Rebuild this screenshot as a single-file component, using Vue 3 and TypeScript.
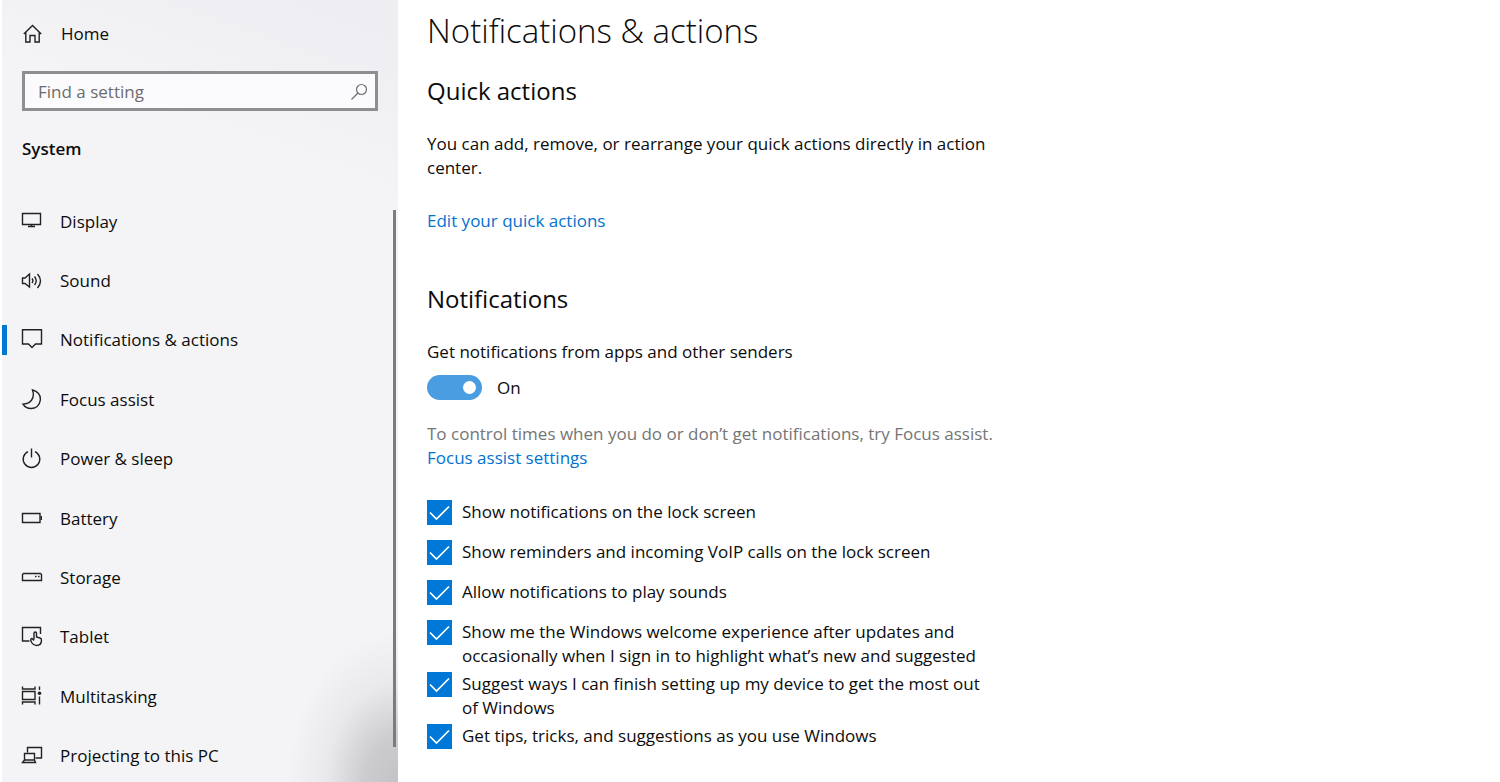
<script setup lang="ts">
import { ref } from 'vue'

interface NavItem {
  id: string
  label: string
}

interface Option {
  id: string
  label: string
  checked: boolean
}

const navItems: NavItem[] = [
  { id: 'display', label: 'Display' },
  { id: 'sound', label: 'Sound' },
  { id: 'notifications', label: 'Notifications & actions' },
  { id: 'focus', label: 'Focus assist' },
  { id: 'power', label: 'Power & sleep' },
  { id: 'battery', label: 'Battery' },
  { id: 'storage', label: 'Storage' },
  { id: 'tablet', label: 'Tablet' },
  { id: 'multitasking', label: 'Multitasking' },
  { id: 'projecting', label: 'Projecting to this PC' },
]

const current = ref('notifications')
const query = ref('')
const notificationsOn = ref(true)

const options = ref<Option[]>([
  { id: 'lock', label: 'Show notifications on the lock screen', checked: true },
  { id: 'voip', label: 'Show reminders and incoming VoIP calls on the lock screen', checked: true },
  { id: 'sounds', label: 'Allow notifications to play sounds', checked: true },
  {
    id: 'welcome',
    label: 'Show me the Windows welcome experience after updates and occasionally when I sign in to highlight what’s new and suggested',
    checked: true,
  },
  {
    id: 'setup',
    label: 'Suggest ways I can finish setting up my device to get the most out of Windows',
    checked: true,
  },
  { id: 'tips', label: 'Get tips, tricks, and suggestions as you use Windows', checked: true },
])
</script>

<template>
  <div class="settings">
    <aside class="sidebar">
      <a class="home" href="#home">
        <svg class="icon" viewBox="0 0 22 22" aria-hidden="true">
          <path d="M1.8 11 L10.5 2.5 L19.2 11 M3.8 9.5 V19 H8 V12.5 H13 V19 H17.2 V9.5" />
        </svg>
        <span>Home</span>
      </a>

      <div class="search">
        <input v-model="query" type="text" placeholder="Find a setting" aria-label="Find a setting" />
        <svg class="search-icon" viewBox="0 0 18 18" aria-hidden="true">
          <circle cx="11.5" cy="6.5" r="5" />
          <path d="M8 10 L1.5 16.5" />
        </svg>
      </div>

      <h2 class="category">System</h2>

      <nav class="nav" aria-label="System">
        <ul class="nav-list">
          <li v-for="item in navItems" :key="item.id">
            <a
              class="nav-link"
              :class="{ active: current === item.id }"
              :href="'#' + item.id"
              @click="current = item.id"
            >
              <svg class="icon" viewBox="0 0 22 22" aria-hidden="true">
                <g v-if="item.id === 'display'">
                  <path d="M1.5 2.5 H19.5 V13.5 H1.5 Z M10.5 13.5 V16 M7 15.5 H14" />
                </g>
                <g v-else-if="item.id === 'sound'">
                  <path d="M1.5 8 H4 L8.5 4 V17 L4 13.5 H1.5 Z" />
                  <path d="M11 8.5 Q12.8 10.8 11 13 M13.5 6.5 Q17 10.8 13.5 15 M16.5 4 Q22.5 10.8 16.5 18" />
                </g>
                <g v-else-if="item.id === 'notifications'">
                  <path d="M1.5 0.8 H20.5 V15 H14.5 L11 18.5 L7.5 15 H1.5 Z" />
                </g>
                <g v-else-if="item.id === 'focus'">
                  <path d="M11.5 0.9 C17 2.6 19.8 6.1 19.3 11.1 C18.6 16.6 14.5 19.5 10 19.5 C6.5 19.5 3.5 17.6 2 15.1 C9 15.1 14.5 9.6 11.5 0.9 Z" />
                </g>
                <g v-else-if="item.id === 'power'">
                  <path d="M10.5 0.5 V9.5 M7 3.6 A8.3 8.3 0 1 0 14 3.6" />
                </g>
                <g v-else-if="item.id === 'battery'">
                  <path d="M1.5 5.5 H19 V14.5 H1.5 Z" />
                  <path d="M20.3 8 V12" />
                </g>
                <g v-else-if="item.id === 'storage'">
                  <path d="M2.5 6.5 H19.5 L20.5 7.5 V13.5 H1.5 V7.5 Z" />
                  <path d="M14 9.5 H15.5 M17 9.5 H18.5" />
                </g>
                <g v-else-if="item.id === 'tablet'">
                  <path d="M8.5 15 H1.5 V1.5 H19.5 V8" />
                  <path d="M13 13.5 V7.3 Q13 6 14.2 6 Q15.5 6 15.5 7.3 V11 L19 12 Q20.5 12.5 20.5 14 Q20.5 19.5 15.5 19.5 Q12.5 19.5 11 17 L9.8 14.5 Q9.5 12.7 11 12.5 L13 14.5" />
                </g>
                <g v-else-if="item.id === 'multitasking'">
                  <path d="M1.5 5.5 H14 V13.5 H1.5 Z M1.5 0.5 V3 H14 V0.5 M1.5 18.5 V16 H14 V18.5 M18.5 0.5 V4 M18.5 10.5 V18.5" />
                  <circle class="solid" cx="18.5" cy="7.3" r="1.8" />
                </g>
                <g v-else>
                  <path d="M6.5 7.5 V2.5 H20.5 V13 H14.5" />
                  <path d="M3.5 8.5 H13.5 V15 H3.5 Z M3.5 15 L1.5 17.5 H14.5 L13.5 15" />
                </g>
              </svg>
              <span>{{ item.label }}</span>
            </a>
          </li>
        </ul>
        <span class="scroll-thumb"></span>
      </nav>
    </aside>

    <main class="content">
      <h1>Notifications &amp; actions</h1>

      <section>
        <h2>Quick actions</h2>
        <p>You can add, remove, or rearrange your quick actions directly in action center.</p>
        <a class="link edit" href="#quick-actions">Edit your quick actions</a>
      </section>

      <section class="notifications">
        <h2>Notifications</h2>
        <label class="switch-label" for="get-notifications">Get notifications from apps and other senders</label>
        <div class="switch-row">
          <input id="get-notifications" v-model="notificationsOn" class="switch" type="checkbox" role="switch" />
          <span>{{ notificationsOn ? 'On' : 'Off' }}</span>
        </div>
        <p class="hint">
          To control times when you do or don’t get notifications, try Focus assist.
          <a class="link" href="#focus-settings">Focus assist settings</a>
        </p>
        <ul class="options">
          <li v-for="option in options" :key="option.id">
            <label class="option">
              <span class="box">
                <input v-model="option.checked" type="checkbox" />
                <svg v-if="option.checked" viewBox="0 0 25 25" aria-hidden="true">
                  <path d="M3 12.5 L9.5 19 L22 6.5" />
                </svg>
              </span>
              <span>{{ option.label }}</span>
            </label>
          </li>
        </ul>
      </section>
    </main>
  </div>
</template>

<style>
body {
  margin: 0;
  background: #fff;
}
</style>

<style scoped>
.settings {
  display: flex;
  height: 100vh;
  overflow: hidden;
  box-sizing: border-box;
  padding-left: 2px;
  color: #0c0c0c;
  background: #fff;
  font-family: 'Open Sans', 'Noto Sans', sans-serif;
  font-size: 17px;
  line-height: 24px;
}

ul {
  margin: 0;
  padding: 0;
  list-style: none;
}

a {
  color: inherit;
  text-decoration: none;
}

.sidebar {
  display: flex;
  flex-direction: column;
  flex: 0 0 396px;
  box-sizing: border-box;
  background:
    radial-gradient(ellipse 110px 150px at 100% 100%, #c3c3c5 0, rgba(200, 200, 202, 0.9) 30%, rgba(222, 222, 224, 0.5) 65%, rgba(244, 244, 246, 0) 100%),
    linear-gradient(200deg, #ededf2 0, #f4f4f6 22%);
}

.icon {
  flex: none;
  width: 22px;
  height: 22px;
  fill: none;
  stroke: #222;
  stroke-width: 1.4;
}

.solid {
  fill: #222;
  stroke: none;
}

.home {
  display: flex;
  align-items: center;
  gap: 17px;
  margin: 22px 20px 0;
}

.search {
  display: flex;
  align-items: center;
  box-sizing: border-box;
  height: 40px;
  margin: 25px 20px 0;
  padding: 2px 7px 0 13px;
  border: 3px solid #8e8f93;
  background: #fbfbfd;
}

.search input {
  flex: 1;
  min-width: 0;
  padding: 0;
  border: 0;
  outline: 0;
  background: none;
  color: #111;
  font: inherit;
}

.search input::placeholder {
  color: #6c6c6e;
  opacity: 1;
}

.search-icon {
  width: 18px;
  height: 18px;
  fill: none;
  stroke: #707073;
  stroke-width: 1.2;
}

.category {
  margin: 26px 20px 0;
  font-size: 17px;
  font-weight: 600;
  line-height: 24px;
}

.nav {
  position: relative;
  flex: 1;
  min-height: 0;
  margin-top: 31px;
  overflow: hidden;
}

.nav-list {
  display: grid;
  grid-auto-rows: 1fr;
  height: 594px;
}

.nav-link {
  display: flex;
  align-items: center;
  gap: 17px;
  height: 100%;
  padding-left: 19px;
}

.nav-link.active {
  padding-left: 0;
}

.nav-link.active::before {
  content: '';
  width: 5px;
  height: 30px;
  margin-right: -3px;
  background: #0078d7;
}

.scroll-thumb {
  position: absolute;
  top: 18px;
  right: 2px;
  bottom: 35px;
  width: 3px;
  background: #7c7c7e;
}

.content {
  flex: 1;
  max-width: 570px;
  padding: 11px 29px 0;
}

h1 {
  margin: 0 0 24px;
  font-size: 33px;
  font-weight: 300;
  line-height: 40px;
}

.content h2 {
  margin: 0 0 25px;
  font-size: 24px;
  font-weight: 400;
  line-height: 32px;
}

p {
  margin: 0;
}

.link {
  color: #0073cf;
}

.edit {
  display: inline-block;
  margin-top: 29px;
}

.notifications {
  margin-top: 50px;
}

.switch-label {
  display: block;
}

.switch-row {
  display: flex;
  align-items: center;
  gap: 15px;
  margin-top: 11px;
}

.switch {
  display: flex;
  align-items: center;
  appearance: none;
  box-sizing: border-box;
  width: 55px;
  height: 25px;
  margin: 0;
  padding: 0 6px;
  border-radius: 13px;
  background: #8e8f93;
}

.switch::before {
  content: '';
  width: 13px;
  height: 13px;
  border-radius: 50%;
  background: #fff;
}

.switch:checked {
  justify-content: flex-end;
  background: #4a9de0;
}

.hint {
  margin-top: 22px;
  color: #757575;
}

.hint .link {
  display: block;
}

.options {
  display: grid;
  gap: 4px;
  margin-top: 30px;
}

.option {
  display: flex;
  gap: 10px;
  min-height: 36px;
}

.box {
  position: relative;
  flex: none;
  width: 25px;
  height: 25px;
}

.box input {
  display: block;
  appearance: none;
  box-sizing: border-box;
  width: 25px;
  height: 25px;
  margin: 0;
  border: 2px solid #5c5c5c;
}

.box input:checked {
  border: 0;
  background: #0078d7;
}

.box svg {
  position: absolute;
  inset: 0;
  fill: none;
  stroke: #fff;
  stroke-width: 1.7;
  pointer-events: none;
}
</style>
